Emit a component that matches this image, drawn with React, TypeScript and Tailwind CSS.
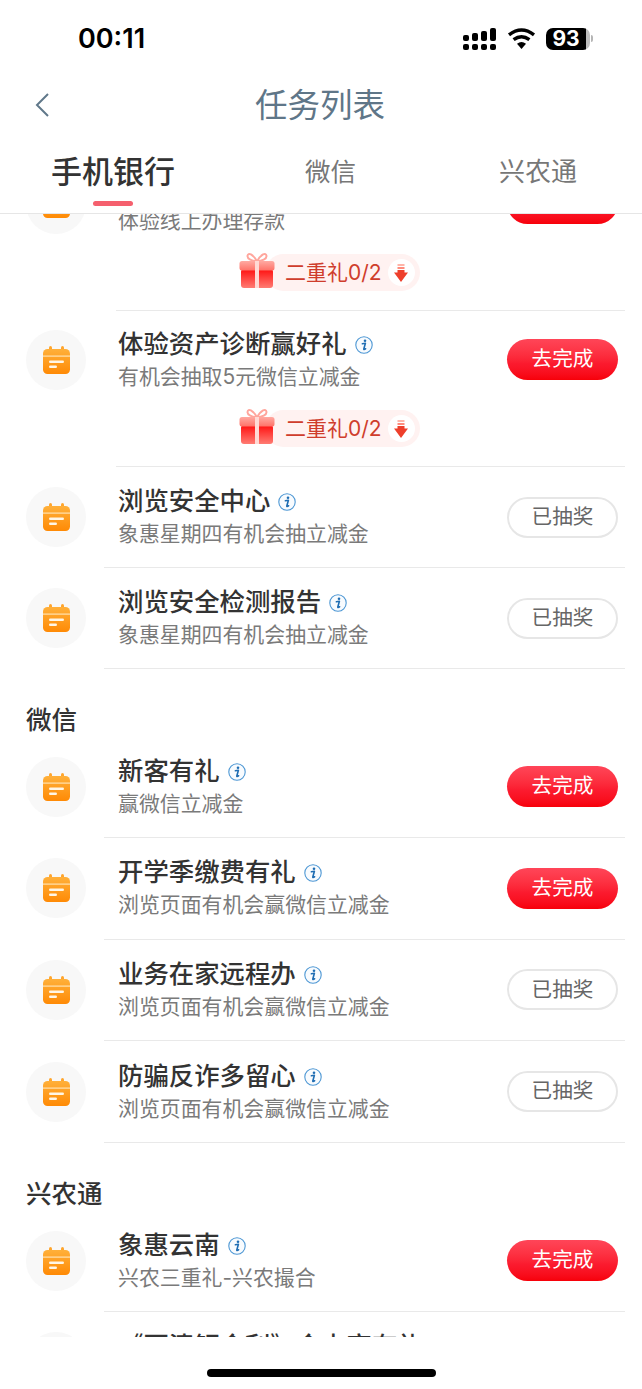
function CalendarIcon() {
  return (
    <svg width="27" height="28" viewBox="0 0 27 28" aria-hidden>
      <defs>
        <linearGradient id="cal" x1="0" y1="0" x2="0" y2="1">
          <stop offset="0" stopColor="#ffb03a" />
          <stop offset="1" stopColor="#ff8a05" />
        </linearGradient>
      </defs>
      <rect x="6" y="0" width="3" height="6" rx="1.5" fill="#ffa52c" />
      <rect x="18" y="0" width="3" height="6" rx="1.5" fill="#ffa52c" />
      <rect x="0" y="3" width="27" height="25" rx="4.5" fill="url(#cal)" />
      <rect x="0" y="9.5" width="27" height="1.2" fill="#ffe2b0" />
      <rect x="6" y="14.5" width="15" height="2.6" rx="1.3" fill="#fff6e6" />
      <rect x="6" y="19.5" width="8" height="2.6" rx="1.3" fill="#fff6e6" />
    </svg>
  );
}

function InfoIcon() {
  return (
    <svg className="ml-[8px] mt-[3px] shrink-0" width="18" height="18" viewBox="0 0 18 18" aria-hidden>
      <circle cx="9" cy="9" r="8.2" fill="#f8fbfe" stroke="#4d97d4" strokeWidth="1.1" />
      <circle cx="10" cy="4.7" r="1.3" fill="#1f6db3" />
      <path d="M7.4 7.8 L10.4 7.3 L8.8 13 Q8.7 14 10.6 12.8" fill="none" stroke="#1f6db3" strokeWidth="1.6" strokeLinecap="round" strokeLinejoin="round" />
    </svg>
  );
}

function GiftIcon() {
  return (
    <svg className="relative shrink-0" width="36" height="36" viewBox="0 0 36 36" aria-hidden>
      <defs>
        <linearGradient id="lid" x1="0" y1="0" x2="0" y2="1">
          <stop offset="0" stopColor="#ffaaa2" />
          <stop offset="1" stopColor="#ff7268" />
        </linearGradient>
        <linearGradient id="box" x1="0" y1="0" x2="0" y2="1">
          <stop offset="0" stopColor="#ff0f0f" />
          <stop offset="1" stopColor="#ff7c73" />
        </linearGradient>
      </defs>
      <path d="M18 9.5 C14 2 9 0 8.5 4 C8.2 7 13 9 18 9.5 C23 9 27.8 7 27.5 4 C27 0 22 2 18 9.5Z" fill="none" stroke="#ffa69d" strokeWidth="2" />
      <rect x="2" y="17" width="32" height="19" rx="3" fill="url(#box)" />
      <rect x="0.5" y="9" width="35" height="9.5" rx="2.5" fill="url(#lid)" />
      <rect x="16" y="9" width="4" height="27" fill="#ffd9d4" />
    </svg>
  );
}

function DownArrow() {
  return (
    <span className="flex h-[27px] w-[27px] items-center justify-center rounded-full bg-white">
      <svg width="14" height="18" viewBox="0 0 14 18" aria-hidden>
        <rect x="3.5" y="0" width="7" height="2" fill="#ffb4a8" />
        <rect x="3.5" y="3" width="7" height="2" fill="#ff8b7c" />
        <path d="M3.5 6 H10.5 V8.5 H14 L7 18 L0 8.5 H3.5Z" fill="#ee3f2b" />
      </svg>
    </span>
  );
}

function GiftBadge() {
  return (
    <div className="flex h-[58px] items-start pl-[239px]">
      <GiftIcon />
      <div className="ml-[-10px] mt-[2px] flex h-[37px] items-center rounded-full bg-[#fff2f1] pl-[20px] pr-[5px]">
        <span className="text-[21px] leading-none text-[#cf3d2c]">二重礼0/2</span>
        <span className="ml-[6px]">
          <DownArrow />
        </span>
      </div>
    </div>
  );
}

function ActionButton({ done }: { done: boolean }) {
  if (done) {
    return (
      <div className="flex h-[41px] w-[111px] shrink-0 items-center justify-center rounded-full border-2 border-[#e6e6e6] bg-white text-[20.6px] text-[#666666]">
        已抽奖
      </div>
    );
  }
  return (
    <div className="flex h-[41px] w-[111px] shrink-0 items-center justify-center rounded-full bg-gradient-to-b from-[#ff4558] via-[#fb1a2e] via-60% to-[#f70008] text-[20.6px] text-white">
      去完成
    </div>
  );
}

function TaskRow({
  title,
  sub,
  done = false,
  gift = false,
  compact = false,
}: {
  title: string;
  sub: string;
  done?: boolean;
  gift?: boolean;
  compact?: boolean;
}) {
  return (
    <div>
      <div
        className={`flex ${gift ? "h-[97px]" : compact ? "h-[100px]" : "h-[100.6px]"} items-center pl-[26px] pr-6`}
      >
        <div className="flex h-[60px] w-[60px] shrink-0 items-center justify-center rounded-full bg-[#f8f8f8]">
          <CalendarIcon />
        </div>
        <div className="ml-8 min-w-0 flex-1">
          <div className="flex items-center text-[25.4px] font-medium leading-[33px] text-[#333333]">
            <span className="whitespace-nowrap">{title}</span>
            <InfoIcon />
          </div>
          <div className="whitespace-nowrap text-[20.9px] leading-[33px] text-[#7a7a7a]">{sub}</div>
        </div>
        <ActionButton done={done} />
      </div>
      {gift && <GiftBadge />}
      <div className={`${gift ? "ml-[116px]" : "ml-[104px]"} mr-[17px] h-px bg-[#e9e9e9]`} />
    </div>
  );
}

function SectionTitle({ children }: { children: React.ReactNode }) {
  return (
    <div className="h-[67.5px] pl-[26px] pt-[34px]">
      <span className="block text-[25.5px] font-medium leading-[34px] text-[#333333]">{children}</span>
    </div>
  );
}

function StatusBar() {
  const cols = ["h-[6px]", "h-[8px]", "h-[10px]", "h-[13px]"];
  return (
    <div className="flex h-[74px] items-center pl-[78px] pt-[3px]">
      <span className="font-['Inter',sans-serif] text-[27px] font-semibold leading-none text-black">00:11</span>
      <div className="ml-auto flex items-center pr-[49px]">
        <div className="flex items-end gap-[3px]">
          {cols.map((c, i) => (
            <div key={i} className="flex w-[6px] flex-col gap-[3px]">
              <span className={`${c} rounded-[2px] bg-black`} />
              <span className="h-[6px] rounded-[2px] bg-black" />
            </div>
          ))}
        </div>
        <svg className="ml-[11px]" width="29" height="21" viewBox="0 0 29 21" aria-hidden>
          <path d="M14.5 21 L10 15.8 Q14.5 12 19 15.8Z" fill="#000" />
          <path d="M6.6 11.7 Q14.5 5.6 22.4 11.7" fill="none" stroke="#000" strokeWidth="3.4" />
          <path d="M2 6.8 Q14.5 -2.8 27 6.8" fill="none" stroke="#000" strokeWidth="3.4" />
        </svg>
        <div className="ml-[10px] flex items-center">
          <div className="flex h-[22px] w-[44px] overflow-hidden rounded-[7px]">
            <div className="flex flex-1 items-center justify-center bg-black font-['Inter',sans-serif] text-[21px] font-bold leading-none text-white">
              93
            </div>
            <div className="w-[4px] bg-[#bdbdbd]" />
          </div>
          <div className="ml-[1px] h-[7px] w-[2px] rounded-r-sm bg-[#b5b5b5]" />
        </div>
      </div>
    </div>
  );
}

function TopNav() {
  return (
    <div className="relative flex h-[62px] items-center justify-center pr-[2px] pt-[3px]">
      <svg className="absolute left-[34px] top-[18px]" width="16" height="26" viewBox="0 0 16 26" aria-hidden>
        <path d="M14 2 L3 13 L14 24" fill="none" stroke="#60788a" strokeWidth="2" />
      </svg>
      <span className="text-[32.5px] leading-none text-[#5f7688]">任务列表</span>
    </div>
  );
}

function Tabs() {
  return (
    <div className="flex h-[78px] items-start border-b border-[#e6e6e6] pl-[51px] pt-[16px]">
      <div className="flex flex-col items-center">
        <span className="text-[31px] font-medium leading-[40px] text-[#333333]">手机银行</span>
        <span className="mt-[9px] h-[5px] w-[40px] rounded-full bg-[#f5606e]" />
      </div>
      <span className="ml-[130px] text-[25.5px] leading-[40px] text-[#777777]">微信</span>
      <span className="ml-[143px] text-[26px] leading-[40px] text-[#777777]">兴农通</span>
    </div>
  );
}

export default function App() {
  return (
    <div className="flex h-[1389px] w-[642px] flex-col overflow-hidden bg-white font-['Inter','Noto_Sans_CJK_SC',sans-serif]">
      <StatusBar />
      <TopNav />
      <Tabs />
      <div className="flex-1 overflow-hidden">
        <div className="mt-[-59px]">
          <TaskRow title="体验线上存款赢好礼" sub="体验线上办理存款" gift />
          <TaskRow title="体验资产诊断赢好礼" sub="有机会抽取5元微信立减金" gift />
          <TaskRow title="浏览安全中心" sub="象惠星期四有机会抽立减金" done compact />
          <TaskRow title="浏览安全检测报告" sub="象惠星期四有机会抽立减金" done compact />
          <SectionTitle>微信</SectionTitle>
          <TaskRow title="新客有礼" sub="赢微信立减金" />
          <TaskRow title="开学季缴费有礼" sub="浏览页面有机会赢微信立减金" />
          <TaskRow title="业务在家远程办" sub="浏览页面有机会赢微信立减金" done />
          <TaskRow title="防骗反诈多留心" sub="浏览页面有机会赢微信立减金" done />
          <SectionTitle>兴农通</SectionTitle>
          <TaskRow title="象惠云南" sub="兴农三重礼-兴农撮合" />
          <TaskRow title="《百清钜金利》金卡享有礼" sub="浏览页面有机会赢微信立减金" />
        </div>
      </div>
      <div className="flex h-[52px] justify-center bg-white pt-[32px]">
        <div className="h-[8px] w-[229px] rounded-full bg-black" />
      </div>
    </div>
  );
}
